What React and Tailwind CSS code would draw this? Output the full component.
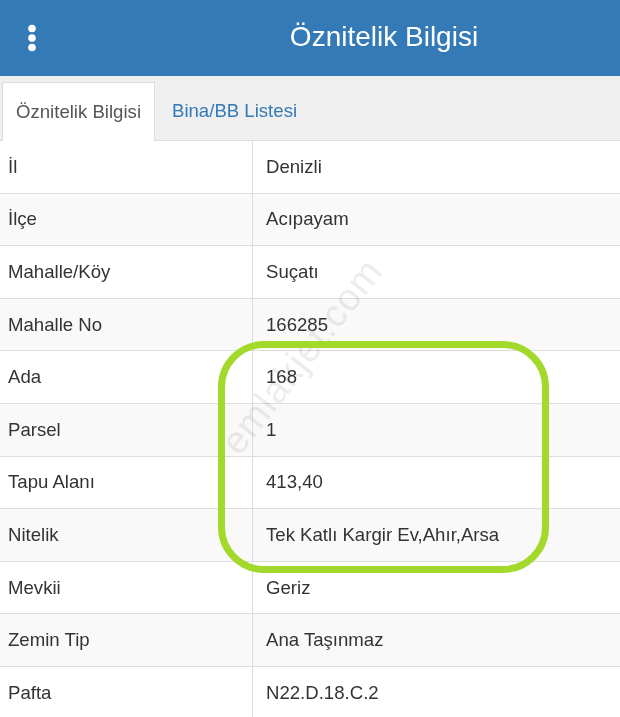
import React from 'react';

const rows = [
  ['İl', 'Denizli'],
  ['İlçe', 'Acıpayam'],
  ['Mahalle/Köy', 'Suçatı'],
  ['Mahalle No', '166285'],
  ['Ada', '168'],
  ['Parsel', '1'],
  ['Tapu Alanı', '413,40'],
  ['Nitelik', 'Tek Katlı Kargir Ev,Ahır,Arsa'],
  ['Mevkii', 'Geriz'],
  ['Zemin Tip', 'Ana Taşınmaz'],
  ['Pafta', 'N22.D.18.C.2'],
];

export default function App() {
  return (
    <div className="relative w-[620px] h-[717px] overflow-hidden bg-white [font-family:'Liberation_Sans',Arial,sans-serif] text-[#333]">
      {/* Header */}
      <div className="h-[76px] bg-[#337ab7] flex items-center">
        <div className="w-[64px] flex justify-center">
          <svg width="10" height="28" viewBox="0 0 10 28">
            <circle cx="5" cy="4.5" r="3.8" fill="#fff" />
            <circle cx="5" cy="14" r="3.8" fill="#fff" />
            <circle cx="5" cy="23.5" r="3.8" fill="#fff" />
          </svg>
        </div>
        <div className="flex-1 text-center text-white text-[28px] pl-[84px] pb-[2px]">Öznitelik Bilgisi</div>
      </div>

      {/* Tabs */}
      <div className="h-[65px] bg-[#efefef] flex items-end pl-[2px] border-b border-[#ddd]">
        <div className="h-[59px] w-[153px] bg-white border border-b-0 border-[#ddd] flex items-center justify-center text-[18.6px] text-[#555] -mb-px">
          Öznitelik Bilgisi
        </div>
        <div className="h-[59px] flex items-center pl-[17px] text-[18.6px] text-[#337ab7]">Bina/BB Listesi</div>
      </div>

      {/* Table */}
      <div>
        {rows.map(([k, v], i) => (
          <div
            key={k}
            className={`flex h-[52.6px] border-b border-[#ddd] text-[18.6px] ${i % 2 === 1 ? 'bg-[#f9f9f9]' : 'bg-white'}`}
          >
            <div className="w-[253px] border-r border-[#ddd] flex items-center pl-[8px]">{k}</div>
            <div className="flex-1 flex items-center pl-[13px]">{v}</div>
          </div>
        ))}
      </div>

      {/* Watermark */}
      <div className="absolute left-[184px] top-[328px] -rotate-[52deg] text-[38px] text-[#ededed] mix-blend-multiply tracking-[1px] pointer-events-none">
        emlakjet.com
      </div>

      {/* Highlight */}
      <div className="absolute left-[218px] top-[341px] w-[331px] h-[232px] rounded-[46px] border-[7px] border-[#a3d92a] pointer-events-none" />
    </div>
  );
}
